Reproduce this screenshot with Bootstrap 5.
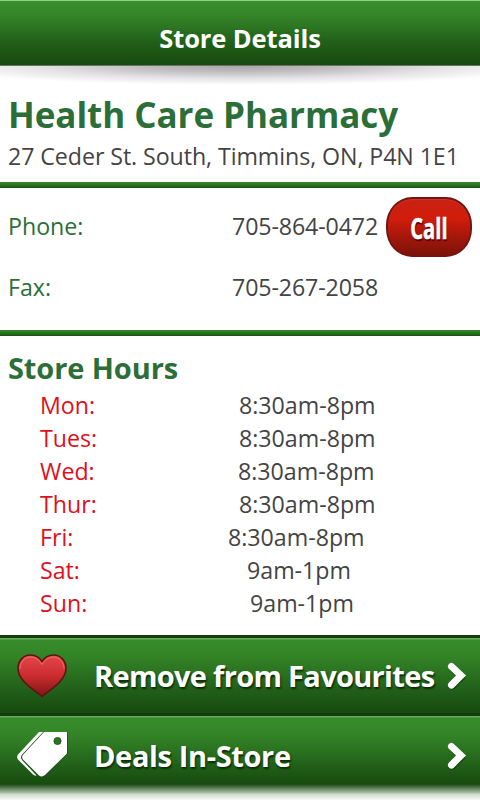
<!DOCTYPE html>
<html lang="en">
<head>
<meta charset="utf-8">
<meta name="viewport" content="width=device-width, initial-scale=1">
<title>Store Details</title>
<link href="https://cdn.jsdelivr.net/npm/bootstrap@5.3.0/dist/css/bootstrap.min.css" rel="stylesheet">
<style>
  body { font-family: "Open Sans", "Noto Sans", sans-serif; font-size: 23.2px; color: #444; background: #fff; }
  .app { height: 800px; overflow: hidden; }
  .app-bar { height: 66px; padding-top: 11px; border-top: 1px solid #98cb90; border-bottom: 1px solid #61755e;
    background: linear-gradient(#37922a, #348527 22%, #215f19 65%, #184b10 96%); }
  .app-bar h1 { font-size: 25.5px; line-height: 52px; letter-spacing: -.1px; color: #fff; }
  .bar-shadow { height: 19px; background: radial-gradient(ellipse 64% 100% at 50% 0, #a9a5aa 0, #bfbbbf 30%, #e4e2e4 65%, #fff 100%); }
  .store-name { font-size: 35px; line-height: 44px; padding-top: 8px; letter-spacing: -.05px; color: #2b6e38; }
  .address { line-height: 38px; height: 45px; letter-spacing: -.07px; }
  .rule { height: 6px; background: linear-gradient(#3a8a2e, #2a7420 45%, #1a5212); }
  .contact { height: 142px; padding-top: 8px; }
  .contact-line { height: 61px; line-height: 61px; }
  .contact-label { width: 224px; color: #2b6e38; }
  .contact-value { width: 154px; letter-spacing: -.12px; }
  .btn-call { width: 86px; height: 60px; margin-top: 1px; border: 2px solid #76140f; border-radius: 26px / 28px; color: #fff !important;
    background: linear-gradient(#c92112, #d11c0b 35%, #a8170b 65%, #7d1209); box-shadow: inset 0 1px 1px #c93a2a; font-size: 28px; line-height: 59px; }
  .btn-call span { display: inline-block; transform: scaleX(.72); margin: 0 -10px; text-shadow: 1px 2px 1px #500; -webkit-text-stroke: .5px #fff; }
  .hours-title { font-size: 29px; line-height: 40px; padding-top: 12px; letter-spacing: -.1px; color: #2b6e38; }
  .hour-line { height: 33px; line-height: 35px; padding-left: 40px; }
  .day { width: 199px; color: #e0101a; }
  .day-wed { width: 198px; }
  .day-fri { width: 188px; }
  .day-sat { width: 207px; }
  .day-sun { width: 210px; }
  .menu { margin-top: 16px; }
  .menu-link { height: 78px; padding: 0 13px 0 17px; border-top: 3px solid #143d0d; color: #fff; text-decoration: none;
    background: linear-gradient(#66ab5c 0 1px, #378c2a 2px, #348527 22%, #215f19 70%, #184b10 98%);
    font-size: 29px; font-weight: 700; letter-spacing: -.68px; text-shadow: 1px 2px 2px #0b2b07; }
  .menu-link:hover { color: #fff; }
  .menu-icon { width: 77px; }
  .menu-link.deals { height: 87px; padding-bottom: 4px; letter-spacing: -.36px;
    background: linear-gradient(#66ab5c 0 1px, #378c2a 2px, #348527 18px, #215f19 50px, #184b10 68px, #385f31 70px, #7d987a 74px, #a3b7a0 76.500px, #cbd9c8 78px, #e0ebde 81px, #f5faf4 84px); }
</style>
<script src="https://cdn.jsdelivr.net/npm/bootstrap@5.3.0/dist/js/bootstrap.bundle.min.js"></script>
</head>
<body>
<div class="app">
  <header class="app-bar text-center"><h1 class="fw-bold m-0">Store Details</h1></header>
  <div class="bar-shadow"></div>
  <main>
    <h2 class="store-name fw-bold m-0 ps-2 text-nowrap">Health Care Pharmacy</h2>
    <div class="address ps-2 text-nowrap">27 Ceder St. South, Timmins, ON, P4N 1E1</div>
    <div class="rule"></div>
    <section class="contact">
      <div class="contact-line d-flex ps-2">
        <span class="contact-label">Phone:</span><span class="contact-value">705-864-0472</span>
        <a class="btn btn-call p-0 fw-bold" href="#"><span>Call</span></a>
      </div>
      <div class="contact-line d-flex ps-2">
        <span class="contact-label">Fax:</span><span class="contact-value">705-267-2058</span>
      </div>
    </section>
    <div class="rule"></div>
    <section>
      <h3 class="hours-title fw-bold m-0 ps-2">Store Hours</h3>
      <div class="hour-line d-flex"><span class="day">Mon:</span><span>8:30am-8pm</span></div>
      <div class="hour-line d-flex"><span class="day">Tues:</span><span>8:30am-8pm</span></div>
      <div class="hour-line d-flex"><span class="day day-wed">Wed:</span><span>8:30am-8pm</span></div>
      <div class="hour-line d-flex"><span class="day">Thur:</span><span>8:30am-8pm</span></div>
      <div class="hour-line d-flex"><span class="day day-fri">Fri:</span><span>8:30am-8pm</span></div>
      <div class="hour-line d-flex"><span class="day day-sat">Sat:</span><span>9am-1pm</span></div>
      <div class="hour-line d-flex"><span class="day day-sun">Sun:</span><span>9am-1pm</span></div>
    </section>
  </main>
  <nav class="menu">
    <a class="menu-link d-flex align-items-center text-nowrap" href="#">
      <span class="menu-icon d-flex"><svg width="50" height="44" viewBox="0 0 50 44">
        <defs><linearGradient id="heart" x1="0" y1="0" x2="0" y2="1"><stop offset="0" stop-color="#e4474a"/><stop offset=".5" stop-color="#cb2c2f"/><stop offset="1" stop-color="#7c1518"/></linearGradient></defs>
        <path d="M25 42.500C18 36.500 1 27 1 14.500C1 6 7 1 13.500 1C18.500 1 22.500 3.500 25 7.500C27.500 3.500 31.500 1 36.500 1C43 1 49 6 49 14.500C49 27 32 36.500 25 42.500Z" fill="url(#heart)" stroke="#5b1510" stroke-width="1.600"/>
        <path d="M3 15C3 7 8.500 3 13.500 3C18.500 3 22.500 6 25 10.500C27.500 6 31.500 3 36.500 3C41.500 3 47 7 47 15" fill="none" stroke="#ee8582" stroke-width="1" opacity=".7"/>
      </svg></span>
      <span class="flex-grow-1">Remove from Favourites</span>
      <svg width="20" height="30" viewBox="0 0 20 30"><path d="M5.500 6L14.500 15L5.500 24" transform="translate(0 1.500)" fill="none" stroke="#0d3308" stroke-width="6.500" stroke-linecap="round" opacity=".6"/><path d="M4.500 5.500L14 14.500L4.500 24" fill="none" stroke="#fff" stroke-width="7" stroke-linecap="round"/></svg>
    </a>
    <a class="menu-link deals d-flex align-items-center text-nowrap" href="#">
      <span class="menu-icon d-flex"><svg width="51" height="48" viewBox="0 0 51 48">
        <path d="M22 0H27L5 23Q3 25 5 28L19.500 43.500Q17.500 44 16 42.500L1 27.500Q-.8 25 1 22.500Z" fill="#fff"/>
        <path d="M27 0H50V21.500L28 43Q25 45.500 22 43.500L6 27.500Q4.200 25 6 22.800Z" fill="#fff" stroke="#1d4f15" stroke-width="1.400" paint-order="stroke"/>
        <circle cx="40.500" cy="9" r="3.600" fill="#2c7422" stroke="#174b10" stroke-width=".8"/>
      </svg></span>
      <span class="flex-grow-1">Deals In-Store</span>
      <svg width="20" height="30" viewBox="0 0 20 30"><path d="M5.500 6L14.500 15L5.500 24" transform="translate(0 1.500)" fill="none" stroke="#0d3308" stroke-width="6.500" stroke-linecap="round" opacity=".6"/><path d="M4.500 5.500L14 14.500L4.500 24" fill="none" stroke="#fff" stroke-width="7" stroke-linecap="round"/></svg>
    </a>
  </nav>
</div>
</body>
</html>
